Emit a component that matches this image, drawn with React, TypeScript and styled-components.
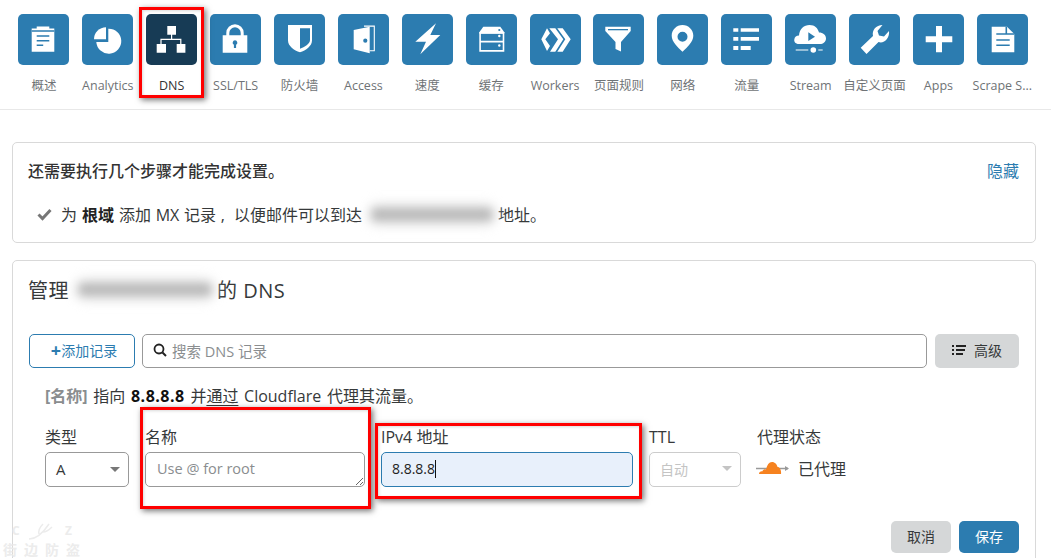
import * as React from "react"
import styled, { createGlobalStyle } from "styled-components"

const GlobalStyle = createGlobalStyle`
  html, body {
    margin: 0;
    height: 558px;
    overflow: hidden;
    background: #fff;
  }
  body {
    font-family: "Open Sans", "Noto Sans CJK SC", sans-serif;
    color: #36393a;
  }
  * {
    box-sizing: border-box;
  }
`

const Page = styled.div`
  position: relative;
  width: 1051px;
  height: 558px;
  overflow: hidden;
`

// top icon row
const Nav = styled.nav`
  display: flex;
  height: 110px;
  padding: 14px 0 0 12px;
  border-bottom: 1px solid #e8e8e8;
`

const NavItem = styled.div`
  width: 63.9px;
  display: flex;
  flex-direction: column;
  align-items: center;
  gap: 13px;
`

const Tile = styled.div<{ $active?: boolean }>`
  width: 51px;
  height: 51px;
  border-radius: 5px;
  background: ${(p) => (p.$active ? "#173b55" : "#2c7cb0")};
  svg {
    display: block;
  }
`

const NavLabel = styled.span<{ $active?: boolean }>`
  font-size: 12.5px;
  line-height: 16px;
  white-space: nowrap;
  color: ${(p) => (p.$active ? "#333" : "#6f7376")};
`

const Main = styled.main`
  display: flex;
  flex-direction: column;
  gap: 17px;
  padding: 32px 15px 0 12px;
`

const Card = styled.section`
  border: 1px solid #d9d9d9;
  border-radius: 5px;
  padding: 0 16px;
`

const NoticeHead = styled.div`
  display: flex;
  justify-content: space-between;
  padding-top: 18px;
  height: 37px;
  line-height: 20px;
  margin-left: -1px;
`

const NoticeTitle = styled.strong`
  font-size: 16px;
  font-weight: 500;
  color: #333;
`

const HideLink = styled.a`
  font-size: 16px;
  color: #2c7cb0;
`

const NoticeRow = styled.div`
  display: flex;
  align-items: center;
  height: 24px;
  margin: 22px 0 16px 8px;
  font-size: 16px;
  white-space: pre;
  word-spacing: 0.5px;
  color: #36393a;
  b {
    font-weight: 700;
    color: #222;
    margin: 0 5px;
  }
`

const Check = styled.svg`
  margin-right: 9px;
`

const Blurred = styled.span<{ $w: number }>`
  display: inline-block;
  width: ${(p) => p.$w}px;
  height: 13px;
  margin: 0 6px 0 10px;
  border-radius: 5px;
  background: #bcbcbc;
  box-shadow: 0 0 6px 5px #e6e6e6;
  filter: blur(4px);
`

const DnsTitle = styled.h2`
  display: flex;
  align-items: center;
  margin: 14px 0 31px -1px;
  height: 28px;
  font-size: 20px;
  font-weight: 400;
  letter-spacing: 0.5px;
  white-space: pre;
  color: #36393a;
`

const Toolbar = styled.div`
  display: flex;
  height: 34px;
`

const OutlineButton = styled.button`
  width: 106px;
  height: 34px;
  padding: 0 0 2px 4px;
  border: 1px solid #2c7cb0;
  border-radius: 5px;
  background: #fff;
  color: #2c7cb0;
  font: inherit;
  font-size: 14px;
  b {
    font-weight: 700;
    font-size: 18px;
    line-height: 14px;
    vertical-align: -1px;
  }
`

const SearchBox = styled.div`
  display: flex;
  align-items: center;
  gap: 5px;
  width: 785px;
  margin: 0 8px 0 7px;
  padding: 0 10px 2px;
  border: 1px solid #999;
  border-radius: 5px;
  font-size: 14.5px;
  color: #8a8d8f;
`

const GrayButton = styled.button<{ $w: number }>`
  display: flex;
  align-items: center;
  justify-content: center;
  gap: 8px;
  width: ${(p) => p.$w}px;
  padding: 0 0 2px;
  border: 0;
  border-radius: 5px;
  background: #d5d7d8;
  color: #36393a;
  font: inherit;
  font-size: 14px;
`

const Hint = styled.p`
  margin: 18px 0 0 16px;
  height: 20px;
  line-height: 20px;
  font-size: 16px;
  color: #36393a;
  white-space: nowrap;
  word-spacing: 1.5px;
  em {
    font-style: normal;
    font-weight: 700;
    color: #8a8d8f;
  }
  b {
    color: #111;
    letter-spacing: 0.5px;
  }
  u {
    text-underline-offset: 3px;
  }
`

const Form = styled.div`
  display: flex;
  gap: 16px;
  margin: 21px 0 0 16px;
`

const Field = styled.div<{ $w: number }>`
  width: ${(p) => p.$w}px;
`

const Label = styled.div`
  height: 20px;
  line-height: 20px;
  margin-bottom: 5px;
  font-size: 16px;
  white-space: nowrap;
  color: #36393a;
`

const Select = styled.div<{ $disabled?: boolean }>`
  display: flex;
  align-items: center;
  justify-content: space-between;
  height: 35px;
  padding: 0 8px ${(p) => (p.$disabled ? "2px" : "1px")} 10px;
  border: 1px solid ${(p) => (p.$disabled ? "#ccc" : "#999")};
  border-radius: 5px;
  font-size: ${(p) => (p.$disabled ? "14px" : "15px")};
  color: ${(p) => (p.$disabled ? "#c4c4c4" : "#36393a")};
  &::after {
    content: "";
    border: 5px solid transparent;
    border-top: 5px solid ${(p) => (p.$disabled ? "#c4c4c4" : "#777")};
    border-bottom: 0;
  }
`

const NameInput = styled.textarea`
  display: block;
  width: 100%;
  height: 35px;
  padding: 6px 11px;
  border: 1px solid #999;
  border-radius: 5px;
  outline: 0;
  font: inherit;
  font-size: 14.5px;
  line-height: 20px;
  &::placeholder {
    color: #8a8d8f;
    opacity: 1;
  }
`

const AddressInput = styled.div`
  display: flex;
  align-items: center;
  height: 35px;
  padding: 0 10px 2px;
  border: 1px solid #2c7cb0;
  border-radius: 5px;
  background: #e8f0fb;
  font-size: 14px;
  color: #222;
`

const Caret = styled.span`
  width: 1px;
  height: 18px;
  background: #111;
`

const ProxyRow = styled.div`
  display: flex;
  align-items: center;
  gap: 9px;
  height: 35px;
  margin-left: -1px;
  padding-bottom: 3px;
  font-size: 16px;
  color: #36393a;
`

const Actions = styled.div`
  display: flex;
  justify-content: flex-end;
  gap: 8px;
  height: 32px;
  margin: 34px 0 20px;
`

const SaveButton = styled(GrayButton)`
  background: #2c7cb0;
  color: #fff;
`

// red annotations drawn over the screenshot
const Marker = styled.div<{ $x: number; $y: number; $w: number; $h: number }>`
  position: absolute;
  left: ${(p) => p.$x}px;
  top: ${(p) => p.$y}px;
  width: ${(p) => p.$w}px;
  height: ${(p) => p.$h}px;
  border: 3px solid #f00;
  box-shadow: 2px 2px 6px rgba(0, 0, 0, 0.55), inset 1px 1px 3px rgba(0, 0, 0, 0.15);
  pointer-events: none;
`

const Watermark = styled.div`
  position: absolute;
  left: 3px;
  bottom: 1px;
  width: 78px;
  color: #ececec;
  font-weight: 700;
  line-height: 1;
`

const MarkRow = styled.div`
  display: flex;
  justify-content: space-between;
  align-items: center;
  padding: 0 9px;
  font-size: 12px;
`

const MarkText = styled.div`
  font-size: 14px;
  letter-spacing: 7px;
  white-space: nowrap;
  margin-top: 3px;
`

const W = "#fff"
const B = "#2c7cb0"

const icons: Record<string, React.ReactNode> = {
  overview: (
    <>
      <path fill={W} d="M13.7 14.5h5v-2h12.6v2h5v23.2H13.7z" />
      <path stroke={B} strokeWidth="1.5" fill="none" d="M13.7 17h22.6M18.7 22h12.6M18.7 26.7h12.6M18.7 31.3h6.5" />
    </>
  ),
  analytics: (
    <>
      <path fill={W} d="M24 13.3A12 12 0 0 0 12 25.3H24z" />
      <path fill={W} d="M26.3 14.7A12.5 12.5 0 1 1 14.3 28H26.3z" />
    </>
  ),
  dns: (
    <>
      <path fill={W} d="M21.3 12h8.7v8.7h-8.7zM10.7 30H20v8.7h-9.3zM30.7 30h8.7v8.7h-8.7z" />
      <path stroke={W} strokeWidth="1.2" fill="none" d="M25.6 20v5.3M15 30v-4.7h19.8V30" />
    </>
  ),
  ssl: (
    <>
      <path fill="none" stroke={W} strokeWidth="3" d="M17.8 22v-3a7.2 7.2 0 0 1 14.4 0v3" />
      <path fill={W} fillRule="evenodd" d="M12.7 21.3h24.6v17.4H12.7zM25 26.3a2.4 2.4 0 0 0-1.1 4.5v3.2h2.2v-3.2a2.4 2.4 0 0 0-1.1-4.5z" />
    </>
  ),
  firewall: (
    <path
      fill={W}
      fillRule="evenodd"
      d="M14 11h24v15.5c0 5.5-6 9.8-12 11.8-6-2-12-6.3-12-11.8zM26 14.3v20.5c4.5-1.8 10-4.8 10-8.8V14.3z"
    />
  ),
  access: (
    <>
      <path fill={W} fillRule="evenodd" d="M15.7 16l16-3.3v26.6l-16-4zM27.3 24.6a2.1 2.1 0 1 0 0 4.2 2.1 2.1 0 0 0 0-4.2z" />
      <path fill="none" stroke={W} strokeWidth="1.1" d="M26 12.1h10.3v24.6h-4.6" />
    </>
  ),
  speed: <path fill={W} d="M34 9.3L13.3 27.7H24L18.3 40.3 38.3 21H28.3z" />,
  cache: (
    <>
      <path fill={W} d="M17.3 12.7h17l4 5.5v1.2H13.3v-1.2z" />
      <path fill="none" stroke={W} strokeWidth="1.6" d="M14.1 19h23.4v8.6H14.1zM14.1 27.6h23.4v9.3H14.1z" />
      <circle fill={W} cx="33.3" cy="22" r="1.2" />
      <circle fill={W} cx="33.3" cy="31.5" r="1.2" />
      <circle fill={B} cx="33.3" cy="16" r="1.1" />
    </>
  ),
  workers: (
    <path
      fill={W}
      d="M11.3 25.3L17 14.3 20 19.3 15.3 25.3 20 32 17 37zM19.3 14.3h6L33.3 25.3 25.3 37.7H20L28 25.3zM27.3 14.3h5.4L40.7 25.3 32.7 37.7h-5.4L35.3 25.3z"
    />
  ),
  rules: (
    <>
      <path fill={W} d="M12.3 12.7h25.4V17L28 28v9.5L22.5 35v-7L12.3 17z" />
      <path fill={B} d="M15 15h20v1.3H15z" />
    </>
  ),
  network: (
    <path
      fill={W}
      fillRule="evenodd"
      d="M25.5 11c6 0 10.8 4.8 10.8 10.8 0 6-6 11.5-10.8 16-4.800-4.500-10.800-10-10.800-16C14.700 15.800 19.500 11 25.500 11zM25.500 17.800a5 5 0 1 0 0 10 5 5 0 0 0 0-10z"
    />
  ),
  traffic: (
    <path fill={W} d="M12.300 14.300h5v3.400h-5zM19.700 14.300H38v3.400H19.700zM12.300 23h5v3.700h-5zM19.700 23H38v3.700H19.700zM12.300 32h5v4h-5zM19.700 32h10v4h-10z" />
  ),
  stream: (
    <>
      <path fill={W} d="M14 30C10 30 9 27.500 9.300 25.500 9.500 23 11.500 21.500 14 21.500 14.500 15 19 11 24.500 11 30 11 33 14.500 34 18.500 38 18.500 41 21 41 24.500 41 28 38 30 35 30z" />
      <path fill={B} d="M23.300 18.300L30 22.700 23.300 27z" />
      <path stroke="#b9d3e4" strokeWidth="1.400" d="M10.700 36h12.600M33.300 36h4.400" />
      <circle fill={W} cx="28.300" cy="36" r="2.800" />
    </>
  ),
  pages: (
    <path fill={W} d="M11.700 33.700L24 22C22.800 16 27 11 33.500 11L28.500 17 30 21.500 35 22.500 40 17C41 24 35 30 29.500 28L17.500 40z" />
  ),
  apps: <path fill={W} d="M23 12h6v10.300h10.300v6H29v10h-6v-10H12.700v-6H23z" />,
  scrape: (
    <>
      <path fill={W} d="M14.700 12.700h15.300l7.300 7.300v18.300H14.700z" />
      <path stroke={B} strokeWidth="1.600" fill="none" d="M19.300 20h9.300M19.300 26h13.400M19.300 31.300h13.400M29.300 12.700v7.300h8" />
    </>
  ),
}

const navItems = [
  { key: "overview", label: "概述" },
  { key: "analytics", label: "Analytics" },
  { key: "dns", label: "DNS", active: true },
  { key: "ssl", label: "SSL/TLS" },
  { key: "firewall", label: "防火墙" },
  { key: "access", label: "Access" },
  { key: "speed", label: "速度" },
  { key: "cache", label: "缓存" },
  { key: "workers", label: "Workers" },
  { key: "rules", label: "页面规则" },
  { key: "network", label: "网络" },
  { key: "traffic", label: "流量" },
  { key: "stream", label: "Stream" },
  { key: "pages", label: "自定义页面" },
  { key: "apps", label: "Apps" },
  { key: "scrape", label: "Scrape S..." },
]

export default function App() {
  return (
    <Page>
      <GlobalStyle />
      <Nav>
        {navItems.map((item) => (
          <NavItem key={item.key}>
            <Tile $active={item.active}>
              <svg width="51" height="51" viewBox="0 0 51 51">
                {icons[item.key]}
              </svg>
            </Tile>
            <NavLabel $active={item.active}>{item.label}</NavLabel>
          </NavItem>
        ))}
      </Nav>

      <Main>
        <Card>
          <NoticeHead>
            <NoticeTitle>还需要执行几个步骤才能完成设置。</NoticeTitle>
            <HideLink>隐藏</HideLink>
          </NoticeHead>
          <NoticeRow>
            <Check width="15" height="13" viewBox="0 0 15 13">
              <path fill="none" stroke="#777" strokeWidth="3" d="M1.500 6.500l4 4 8-8.500" />
            </Check>
            为<b>根域</b>添加 MX 记录 ,  以便邮件可以到达
            <Blurred $w={120} />
            地址。
          </NoticeRow>
        </Card>

        <Card>
          <DnsTitle>
            管理
            <Blurred $w={132} />
            的 DNS
          </DnsTitle>

          <Toolbar>
            <OutlineButton>
              <b>+</b>添加记录
            </OutlineButton>
            <SearchBox>
              <svg width="14" height="14" viewBox="0 0 14 14">
                <circle cx="6" cy="6" r="4.500" fill="none" stroke="#222" strokeWidth="1.800" />
                <path stroke="#222" strokeWidth="2" d="M9.500 9.500L13 13" />
              </svg>
              搜索 DNS 记录
            </SearchBox>
            <GrayButton $w={84}>
              <svg width="14" height="12" viewBox="0 0 14 12">
                <path fill="#222" d="M0 1h2v2H0zM4 1h10v2H4zM0 5h2v2H0zM4 5h9v2H4zM0 9h2v2H0zM4 9h7v2H4z" />
              </svg>
              高级
            </GrayButton>
          </Toolbar>

          <Hint>
            <em>[名称]</em> 指向 <b>8.8.8.8</b> 并<u>通过</u> Cloudflare 代理其流量。
          </Hint>

          <Form>
            <Field $w={84}>
              <Label>类型</Label>
              <Select>A</Select>
            </Field>
            <Field $w={220}>
              <Label>名称</Label>
              <NameInput placeholder="Use @ for root" readOnly />
            </Field>
            <Field $w={252}>
              <Label>IPv4 地址</Label>
              <AddressInput>
                8.8.8.8
                <Caret />
              </AddressInput>
            </Field>
            <Field $w={92}>
              <Label>TTL</Label>
              <Select $disabled>自动</Select>
            </Field>
            <Field $w={110}>
              <Label>代理状态</Label>
              <ProxyRow>
                <svg width="33" height="14" viewBox="0 0 33 14">
                  <path stroke="#999" strokeWidth="1.500" d="M0 7.500h32" />
                  <path fill="#999" d="M29 5l4 2.500-4 2.500z" />
                  <path
                    fill="#f6821f"
                    d="M3 13c0-1.800 1.600-2.800 3.200-2.600C7 8.500 9 8 10 8.500 11 4 13 1 16 1c3 0 5 2.500 5.500 5 2.500 0 4 3.500 3.500 7z"
                  />
                </svg>
                已代理
              </ProxyRow>
            </Field>
          </Form>

          <Actions>
            <GrayButton $w={60}>取消</GrayButton>
            <SaveButton $w={60}>保存</SaveButton>
          </Actions>
        </Card>
      </Main>

      <Marker $x={139} $y={7} $w={65} $h={91} />
      <Marker $x={140} $y={407} $w={231} $h={102} />
      <Marker $x={375} $y={423} $w={267} $h={76} />

      <Watermark>
        <MarkRow>
          <span>C</span>
          <svg width="26" height="18" viewBox="0 0 26 18">
            <path fill="none" stroke="#ececec" strokeWidth="1.500" d="M0 17c8 0 14-6 20-15M10 12c-1-4 1-7 4-10M14 10c3 0 6-2 9-5" />
          </svg>
          <span>Z</span>
        </MarkRow>
        <MarkText>街边防盗</MarkText>
      </Watermark>
    </Page>
  )
}
